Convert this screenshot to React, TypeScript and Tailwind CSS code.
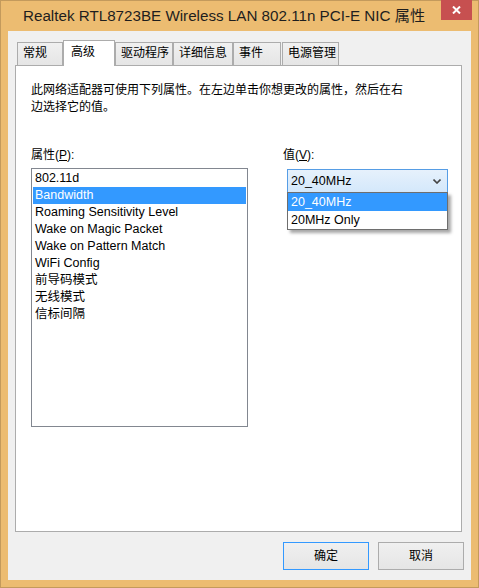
import { useState } from "react";

const FONT = { fontFamily: '"Liberation Sans", "Noto Sans CJK SC", sans-serif' };

const TABS = [
  { label: "常规", w: "w-[46px]" },
  { label: "高级", w: "w-[52px]" },
  { label: "驱动程序", w: "w-[58px]" },
  { label: "详细信息", w: "w-[60px]" },
  { label: "事件", w: "w-[48px]" },
  { label: "电源管理", w: "w-[57px] ml-px" },
];

const PROPS = [
  "802.11d",
  "Bandwidth",
  "Roaming Sensitivity Level",
  "Wake on Magic Packet",
  "Wake on Pattern Match",
  "WiFi Config",
  "前导码模式",
  "无线模式",
  "信标间隔",
];

const VALUES = ["20_40MHz", "20MHz Only"];

export default function App() {
  const [tab, setTab] = useState(1);
  const [sel, setSel] = useState(1);

  return (
    <div className="w-[479px] h-[588px] bg-[#ecbc71] border border-[#c39a5c] flex flex-col text-black" style={FONT}>
      {/* title bar */}
      <div className="h-[30px] flex items-start shrink-0">
        <div className="pl-[22px] pt-[5px] text-[15.2px] leading-[20px] text-[#1e1e1e] flex-1 whitespace-nowrap">
          Realtek RTL8723BE Wireless LAN 802.11n PCI-E NIC 属性
        </div>
        <div className="w-[31px] h-[20px] -mt-px bg-[#c75050] flex items-center justify-center mr-[6px]">
          <svg width="9" height="8" viewBox="0 0 9 8">
            <path d="M1 0.5 L8 7.5 M8 0.5 L1 7.5" stroke="#fff" strokeWidth="2" />
          </svg>
        </div>
      </div>

      {/* client */}
      <div className="mx-[7px] h-[549px] bg-[#f0f0f0] flex flex-col pl-[7px] pr-[9px] pt-[9px]">
        <div className="h-[25px] flex items-end pl-[2px]">
          {TABS.map((t, i) =>
            i === tab ? (
              <div key={t.label} onClick={() => setTab(i)}
                className={`${t.w} h-[26px] -mb-px relative z-10 bg-white border border-b-0 border-[#acacac] pl-[7px] pt-[3px] text-[12px] leading-[17px] cursor-default`}>
                {t.label}
              </div>
            ) : (
              <div key={t.label} onClick={() => setTab(i)}
                className={`${t.w} h-[23px] bg-gradient-to-b from-[#f0f0f0] to-[#e5e5e5] border border-b-0 border-[#acacac] pl-[5px] pt-[2px] text-[12px] leading-[17px] cursor-default`}>
                {t.label}
              </div>
            )
          )}
        </div>

        <div className="h-[467px] bg-white border border-[#acacac] pl-[15px] pt-[16px]">
          <p className="text-[12px] leading-[17px] w-[380px]">
            此网络适配器可使用下列属性。在左边单击你想更改的属性，然后在右边选择它的值。
          </p>

          <div className="mt-[31px] flex">
            <div className="w-[217px]">
              <div className="h-[17px] text-[12px] leading-[17px]">
                属性(<span className="underline">P</span>):
              </div>
              <div className="mt-[4px] w-[217px] h-[259px] border border-[#828790] p-px">
                {PROPS.map((p, i) => (
                  <div key={p} onClick={() => setSel(i)}
                    className={`h-[17px] pl-[2px] text-[12.5px] leading-[17px] whitespace-nowrap cursor-default ${i === sel ? "bg-[#3399ff] text-white" : ""}`}>
                    {p}
                  </div>
                ))}
              </div>
            </div>

            <div className="ml-[35px] w-[165px]">
              <div className="h-[17px] text-[12px] leading-[17px]">
                值(<span className="underline">V</span>):
              </div>
              <div className="relative mt-[5px] ml-[4px] w-[161px]">
                <div className="h-[24px] border border-[#569de5] bg-gradient-to-b from-[#e6f1fc] to-[#d4e8fb] flex items-center pl-[3px] pr-[6px]">
                  <span className="flex-1 text-[12.5px] leading-[17px]">20_40MHz</span>
                  <svg width="8" height="5" viewBox="0 0 8 5">
                    <path d="M0.5 0.5 L4 4 L7.5 0.5" fill="none" stroke="#444" strokeWidth="1.6" />
                  </svg>
                </div>
                <div className="absolute left-0 top-[23px] w-[161px] bg-white border border-[#6e6e6e] shadow-[3px_3px_3px_rgba(0,0,0,0.35)]">
                  {VALUES.map((v, i) => (
                    <div key={v}
                      className={`h-[18px] pl-[3px] text-[12.5px] leading-[18px] ${i === 0 ? "bg-[#3399ff] text-white" : ""}`}>
                      {v}
                    </div>
                  ))}
                </div>
              </div>
            </div>
          </div>
        </div>

        <div className="mt-[10px] flex justify-end gap-[9px] -mr-[2px]">
          <button className="w-[86px] h-[28px] border border-[#3399ff] bg-gradient-to-b from-[#f0f0f0] to-[#e5e5e5] text-[12px]">
            确定
          </button>
          <button className="w-[86px] h-[28px] border border-[#acacac] bg-gradient-to-b from-[#f0f0f0] to-[#e5e5e5] text-[12px]">
            取消
          </button>
        </div>
      </div>
    </div>
  );
}
